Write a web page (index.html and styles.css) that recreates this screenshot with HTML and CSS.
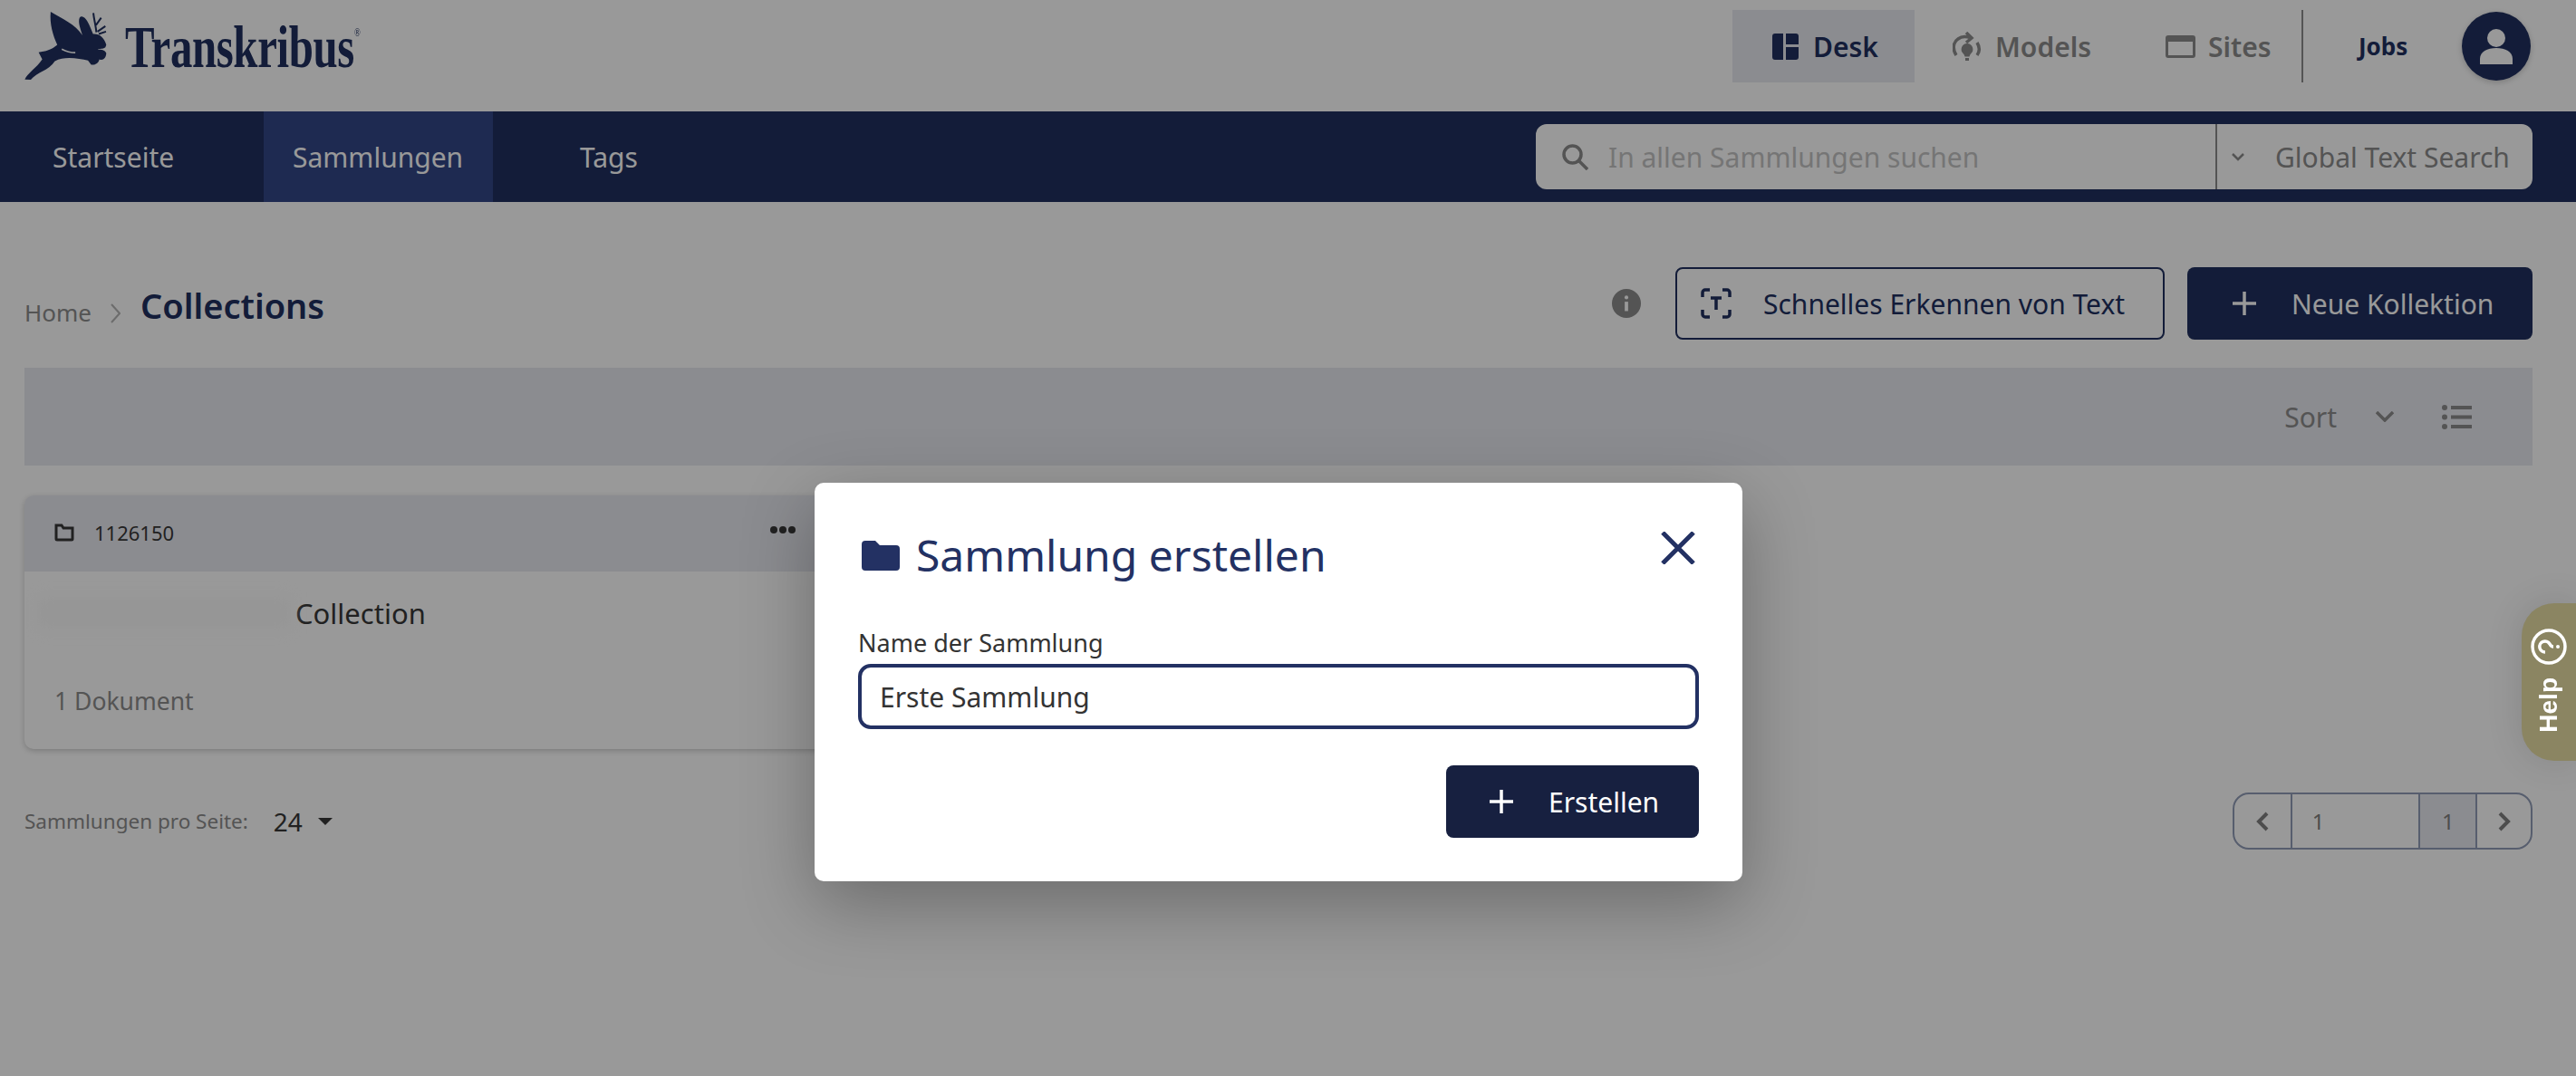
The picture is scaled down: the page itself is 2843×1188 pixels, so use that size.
FILE: index.html
```html
<!DOCTYPE html>
<html lang="de">
<head>
<meta charset="utf-8">
<title>Transkribus</title>
<link rel="stylesheet" href="styles.css">
</head>
<body>
<header class="topbar">
  <a class="logo">
    <svg class="logo-mark" viewBox="82 40 272 226" aria-hidden="true">
      <path class="fill-logo" d="M168 40C205 62 250 82 274 118C268 100 258 75 264 60C272 50 283 60 290 72C298 86 304 102 309 114C330 112 346 126 353 150L350 158C340 166 332 160 324 166C336 164 350 168 353 178C352 194 342 204 330 198C328 210 316 218 303 216L292 202C262 196 216 186 182 204C162 236 122 240 102 266L82 265C90 245 122 226 140 198L128 175C150 172 172 166 190 150C176 120 164 80 168 40Z"/>
      <path class="logo-gap" d="M205 164C220 172 235 176 250 176"/>
      <path class="logo-antler" d="M320 108C318 85 312 65 310 44M319 84L336 60M324 106L350 88M328 114L352 106"/>
    </svg>
    <span class="logo-word">Transkribus<sup class="logo-reg">®</sup></span>
  </a>
  <nav class="appnav">
    <a class="appnav-item is-active">
      <svg class="ico-desk" viewBox="0 0 29 29"><path class="fill-navy-d" d="M3 0h9v29H3a3 3 0 0 1-3-3V3a3 3 0 0 1 3-3zM15 0h11a3 3 0 0 1 3 3v9H15zM15 15h14v11a3 3 0 0 1-3 3H15z"/></svg>
      <span>Desk</span>
    </a>
    <a class="appnav-item models">
      <svg class="ico-models" viewBox="0 0 32 33"><path class="stroke-grey" d="M4 26C0 20 0 12 6 8C10 5 15 5 20 7M15 1l6 6-6 5M27 12c3 5 3 10 0 14"/><path class="fill-grey" d="M16 13a6.500 6.500 0 0 1 4 11.500c-1 1-1 2-1.500 3h-5c-.5-1-.5-2-1.500-3A6.500 6.500 0 0 1 16 13zM14 29h4v3h-4z"/></svg>
      <span>Models</span>
    </a>
    <a class="appnav-item sites">
      <svg class="ico-sites" viewBox="0 0 33 25"><path class="fill-grey" d="M3 0h27a3 3 0 0 1 3 3v19a3 3 0 0 1-3 3H3a3 3 0 0 1-3-3V3a3 3 0 0 1 3-3zm0 7v15h27V7z"/></svg>
      <span>Sites</span>
    </a>
    <span class="appnav-sep"></span>
    <a class="jobs">Jobs</a>
    <span class="avatar">
      <svg class="ico-user" viewBox="0 0 36 40"><circle class="fill-white" cx="18" cy="11" r="10"/><path class="fill-white" d="M0 40v-6c0-8 8-12 18-12s18 4 18 12v6z"/></svg>
    </span>
  </nav>
</header>

<div class="mainnav">
  <nav class="tabs">
    <a class="tab tab-home">Startseite</a>
    <a class="tab tab-coll is-active">Sammlungen</a>
    <a class="tab tab-tags">Tags</a>
  </nav>
  <div class="search">
    <div class="search-left">
      <svg class="ico-search" viewBox="0 0 29 29"><circle class="stroke-search" cx="11.500" cy="11.500" r="9.500"/><path class="stroke-search" d="M18.500 18.500L28 28"/></svg>
      <input class="search-input" placeholder="In allen Sammlungen suchen">
    </div>
    <div class="search-right">
      <svg class="ico-chev-s" viewBox="0 0 14 9"><path class="stroke-grey-thin" d="M1 1l6 6 6-6"/></svg>
      <span>Global Text Search</span>
    </div>
  </div>
</div>

<main class="content">
  <div class="pagehead">
    <div class="crumbs">
      <a class="crumb">Home</a>
      <svg class="ico-crumb" viewBox="0 0 11 22"><path class="stroke-crumb" d="M1 1l9 10-9 10"/></svg>
      <h1 class="crumb-current">Collections</h1>
    </div>
    <div class="actions">
      <span class="info"><svg class="ico-info" viewBox="0 0 34 34"><circle class="fill-grey" cx="17" cy="17" r="17"/><circle class="fill-infodot" cx="17" cy="10" r="2.200"/><path class="fill-infodot" d="M15 15h4v11h-4z"/></svg></span>
      <button class="btn btn-outline">
        <svg class="ico-ocr" viewBox="0 0 34 34"><path class="stroke-navy" d="M10 2H5a3 3 0 0 0-3 3v5M24 2h5a3 3 0 0 1 3 3v5M10 32H5a3 3 0 0 1-3-3v-5M24 32h5a3 3 0 0 0 3-3v-5M11 11h12M17 11v13"/></svg>
        <span>Schnelles Erkennen von Text</span>
      </button>
      <button class="btn btn-solid btn-new">
        <svg class="ico-plus" viewBox="0 0 26 26"><path class="stroke-light" d="M13 0v26M0 13h26"/></svg>
        <span>Neue Kollektion</span>
      </button>
    </div>
  </div>

  <div class="toolbar">
    <span class="sort">Sort</span>
    <svg class="ico-chev" viewBox="0 0 20 12"><path class="stroke-grey" d="M1 1l9 9 9-9"/></svg>
    <svg class="ico-list" viewBox="0 0 33 27"><circle class="fill-grey" cx="3" cy="3" r="3"/><circle class="fill-grey" cx="3" cy="13.500" r="3"/><circle class="fill-grey" cx="3" cy="24" r="3"/><path class="fill-grey" d="M10 1h23v4H10zM10 11.500h23v4H10zM10 22h23v4H10z"/></svg>
  </div>

  <article class="card">
    <div class="card-head">
      <div class="card-id">
        <svg class="ico-folder-o" viewBox="0 0 22 20"><path class="stroke-dark" d="M2 17V2h6l2 3h10v12a1 1 0 0 1-1 1H3a1 1 0 0 1-1-1z"/></svg>
        <span>1126150</span>
      </div>
      <svg class="ico-dots" viewBox="0 0 28 10"><circle class="fill-dark" cx="4" cy="5" r="4"/><circle class="fill-dark" cx="14" cy="5" r="4"/><circle class="fill-dark" cx="24" cy="5" r="4"/></svg>
    </div>
    <div class="card-title"><span class="redacted"></span><span>Collection</span></div>
    <div class="card-count">1 Dokument</div>
  </article>

  <div class="footerbar">
    <div class="perpage">
      <span class="perpage-label">Sammlungen pro Seite:</span>
      <span class="perpage-value">24</span>
      <span class="perpage-caret"></span>
    </div>
    <div class="pager">
      <span class="pager-btn"><svg class="ico-pg" viewBox="0 0 14 22"><path class="stroke-pg" d="M12 2l-9 9 9 9"/></svg></span>
      <span class="pager-input">1</span>
      <span class="pager-total">1</span>
      <span class="pager-btn last"><svg class="ico-pg" viewBox="0 0 14 22"><path class="stroke-pg" d="M2 2l9 9-9 9"/></svg></span>
    </div>
  </div>
</main>

<div class="backdrop"></div>

<aside class="help">
  <svg class="ico-help" viewBox="0 0 40 40"><circle class="stroke-white" cx="20" cy="20" r="18"/><path class="stroke-white-q" d="M14 16a6 6 0 1 1 9 5c-2 1-3 2-3 4"/><circle class="fill-white" cx="20" cy="30" r="2"/></svg>
  <span class="help-text">Help</span>
</aside>

<section class="modal" role="dialog">
  <div class="modal-head">
    <svg class="ico-folder" viewBox="0 0 42 33"><path class="fill-primary" d="M4 0h11l5 5h18a4 4 0 0 1 4 4v20a4 4 0 0 1-4 4H4a4 4 0 0 1-4-4V4a4 4 0 0 1 4-4z"/></svg>
    <h2 class="modal-title">Sammlung erstellen</h2>
    <svg class="ico-close" viewBox="0 0 38 36"><path class="stroke-close" d="M2 1l34 34M36 1L2 35"/></svg>
  </div>
  <label class="field-label" for="name">Name der Sammlung</label>
  <input class="field-input" id="name" value="Erste Sammlung">
  <div class="modal-foot">
    <button class="btn btn-solid btn-create">
      <svg class="ico-plus" viewBox="0 0 26 26"><path class="stroke-white-plus" d="M13 0v26M0 13h26"/></svg>
      <span>Erstellen</span>
    </button>
  </div>
</section>
</body>
</html>
```
FILE: styles.css
```css
* { box-sizing: border-box; }
html, body { margin: 0; padding: 0; }
body {
  width: 2843px;
  height: 1188px;
  overflow: hidden;
  position: relative;
  background: #fff;
  color: #383838;
  font-family: "Noto Sans", "Liberation Sans", sans-serif;
  font-size: 30px;
}
h1, h2 { margin: 0; font-weight: 400; }
svg { display: block; flex: none; }
button, input { font: inherit; }

/* svg paints */
.fill-logo { fill: #20305f; }
.logo-gap { fill: none; stroke: #fff; stroke-width: 5; }
.logo-antler { fill: none; stroke: #20305f; stroke-width: 6; }
.fill-navy-d { fill: #20305f; }
.fill-grey { fill: #8c8c8c; }
.fill-white { fill: #fff; }
.fill-dark { fill: #383838; }
.fill-infodot { fill: #fff; }
.fill-primary { fill: #233163; }
.stroke-grey { fill: none; stroke: #8c8c8c; stroke-width: 3.500; }
.stroke-grey-thin { fill: none; stroke: #8c8c8c; stroke-width: 2.500; }
.stroke-search { fill: none; stroke: #8c8c8c; stroke-width: 3.500; }
.stroke-crumb { fill: none; stroke: #b4b4b4; stroke-width: 2; }
.stroke-navy { fill: none; stroke: #20305f; stroke-width: 3.500; }
.stroke-light { fill: none; stroke: #fff; stroke-width: 3.500; }
.stroke-dark { fill: none; stroke: #383838; stroke-width: 3; }
.stroke-pg { fill: none; stroke: #808080; stroke-width: 4; }
.stroke-white { fill: none; stroke: #fff; stroke-width: 3.500; }
.stroke-white-q { fill: none; stroke: #fff; stroke-width: 3.500; }
.stroke-white-plus { fill: none; stroke: #fff; stroke-width: 3.500; }
.stroke-close { fill: none; stroke: #233163; stroke-width: 5; }

/* top bar */
.topbar {
  height: 123px;
  display: flex;
  justify-content: space-between;
  align-items: flex-start;
  padding: 11px 50px 0 27px;
}
.logo { display: flex; align-items: flex-start; gap: 20px; padding-top: 2px; }
.logo-mark { width: 91px; height: 75px; }
.logo-word {
  margin-top: 1px;
  font-family: "Liberation Serif", serif;
  font-weight: 700;
  font-size: 66px;
  line-height: 76px;
  letter-spacing: -.5px;
  color: #20305f;
  transform: scaleX(.74);
  transform-origin: left center;
}
.logo-reg { font-size: 12px; font-weight: 400; vertical-align: 34px; line-height: 0; letter-spacing: 0; }
.appnav { display: flex; align-items: flex-start; }
.appnav-item {
  height: 80px;
  display: flex;
  align-items: center;
  font-weight: 600;
  color: #8c8c8c;
}
.appnav-item.is-active {
  width: 201px;
  gap: 16px;
  padding-left: 44px;
  background: #e8e9f0;
  color: #20305f;
}
.models { width: 200px; margin-left: 42px; gap: 15px; }
.sites { width: 150px; margin-left: 35px; gap: 14px; }
.ico-desk { width: 29px; height: 29px; }
.ico-models { width: 32px; height: 33px; }
.ico-sites { width: 33px; height: 25px; }
.appnav-sep { width: 2px; height: 80px; background: #8c8c8c; }
.jobs {
  width: 114px;
  height: 80px;
  margin-left: 61px;
  display: flex;
  align-items: center;
  font-size: 26px;
  font-weight: 700;
  color: #20305f;
}
.avatar {
  width: 76px;
  height: 76px;
  margin-top: 2px;
  border-radius: 50%;
  background: #20305f;
  display: flex;
  align-items: center;
  justify-content: center;
  box-shadow: 0 2px 6px rgba(0, 0, 0, .2);
}
.ico-user { width: 36px; height: 40px; }

/* main nav */
.mainnav {
  height: 100px;
  background: #20305f;
  display: flex;
  justify-content: space-between;
  align-items: center;
  padding-right: 48px;
}
.tabs { display: flex; height: 100%; }
.tab {
  display: flex;
  align-items: center;
  height: 100%;
  color: #fff;
}
.tab-home { width: 291px; padding-left: 58px; }
.tab-coll { width: 253px; padding-left: 32px; background: #324788; }
.tab-tags { padding-left: 96px; }
.search {
  width: 1100px;
  height: 72px;
  display: flex;
  background: #fff;
  border-radius: 12px;
}
.search-left { width: 750px; display: flex; align-items: center; padding-left: 29px; gap: 22px; }
.ico-search { width: 29px; height: 29px; }
.search-input { flex: 1; min-width: 0; border: 0; outline: 0; padding: 0; background: none; color: #333; }
.search-input::placeholder { color: #c4c4c4; opacity: 1; }
.search-right {
  flex: 1;
  display: flex;
  align-items: center;
  gap: 34px;
  padding-left: 16px;
  border-left: 2px solid #8c8c8c;
  color: #8c8c8c;
}
.ico-chev-s { width: 14px; height: 9px; }

/* content */
.content { padding: 0 48px 0 27px; }
.pagehead {
  height: 183px;
  display: flex;
  justify-content: space-between;
  align-items: flex-start;
  padding-top: 72px;
}
.crumbs { display: flex; align-items: flex-end; height: 80px; padding-bottom: 10px; }
.crumb { font-size: 26px; line-height: 40px; color: #8c8c8c; }
.ico-crumb { width: 11px; height: 22px; margin: 0 22px 8px 21px; }
.crumb-current { font-size: 38px; line-height: 56px; font-weight: 600; color: #20305f; }
.actions { display: flex; align-items: center; height: 80px; }
.info { margin-right: 38px; }
.ico-info { width: 32px; height: 34px; }
.btn {
  height: 80px;
  display: flex;
  align-items: center;
  border-radius: 8px;
  padding: 0;
  border: 0;
}
.btn-outline {
  width: 540px;
  gap: 35px;
  padding-left: 26px;
  background: none;
  border: 2px solid #20305f;
  color: #20305f;
}
.ico-ocr { width: 34px; height: 34px; }
.btn-solid { background: #20305f; color: #fff; gap: 39px; }
.btn-new { width: 381px; margin-left: 25px; padding-left: 50px; }
.ico-plus { width: 26px; height: 26px; }

.toolbar {
  height: 108px;
  background: #e8e9f0;
  display: flex;
  justify-content: flex-end;
  align-items: center;
  padding-right: 67px;
  color: #8c8c8c;
}
.sort { font-size: 30px; }
.ico-chev { width: 20px; height: 12px; margin: 0 53px 0 43px; }
.ico-list { width: 33px; height: 27px; }

.card {
  width: 890px;
  height: 280px;
  margin-top: 33px;
  background: #fff;
  border-radius: 10px;
  box-shadow: 0 2px 6px rgba(0, 0, 0, .2);
  overflow: hidden;
}
.card-head {
  height: 84px;
  background: #e8e9f0;
  display: flex;
  justify-content: space-between;
  align-items: flex-start;
  padding: 25px 39px 0 33px;
}
.card-id { display: flex; align-items: center; gap: 22px; font-size: 22px; line-height: 32px; }
.ico-folder-o { width: 22px; height: 20px; }
.ico-dots { width: 28px; height: 10px; margin-top: 8px; }
.card-title {
  height: 68px;
  margin-top: 12px;
  display: flex;
  align-items: center;
  padding-left: 14px;
  font-size: 31px;
}
.redacted {
  width: 280px;
  height: 36px;
  margin-right: 5px;
  background: #fafafa;
  filter: blur(8px);
}
.card-count { margin-top: 43px; padding-left: 33px; font-size: 26.500px; line-height: 40px; color: #8c8c8c; }

.footerbar {
  display: flex;
  justify-content: space-between;
  align-items: center;
  height: 63px;
  margin-top: 48px;
}
.perpage { display: flex; align-items: center; }
.perpage-label { font-size: 22.500px; color: #8c8c8c; }
.perpage-value { font-size: 28px; margin-left: 28px; }
.perpage-caret {
  width: 0;
  height: 0;
  margin-left: 17px;
  border: 8px solid transparent;
  border-bottom: 0;
  border-top-color: #383838;
}
.pager {
  width: 331px;
  height: 63px;
  display: flex;
  border: 2px solid #929db8;
  border-radius: 18px;
  font-size: 24px;
  color: #808080;
  overflow: hidden;
}
.pager-btn { width: 62px; display: flex; align-items: center; justify-content: center; }
.pager-btn.last { width: 61px; border-left: 2px solid #929db8; }
.ico-pg { width: 14px; height: 22px; }
.pager-input { width: 142px; display: flex; align-items: center; padding-left: 22px; border-left: 2px solid #929db8; }
.pager-total { width: 63px; display: flex; align-items: center; justify-content: center; background: #e8e9f0; border-left: 2px solid #929db8; }

/* overlay layer */
.backdrop { position: absolute; inset: 0; background: rgba(0, 0, 0, .4); }
.help {
  position: absolute;
  right: 0;
  top: 666px;
  width: 60px;
  height: 174px;
  background: #8b8562;
  border-radius: 36px 0 0 36px;
  box-shadow: 0 0 40px rgba(0, 0, 0, .12);
  display: flex;
  flex-direction: column;
  align-items: center;
  padding: 28px 0 0 0;
  color: #fff;
}
.ico-help { width: 40px; height: 40px; transform: rotate(-90deg); }
.help-text {
  margin-top: 14px;
  writing-mode: vertical-rl;
  transform: rotate(180deg);
  font-family: "Liberation Sans", sans-serif;
  font-size: 28px;
  font-weight: 700;
  line-height: 40px;
}
.modal {
  position: absolute;
  left: 899px;
  top: 533px;
  width: 1024px;
  height: 440px;
  background: #fff;
  border-radius: 10px;
  padding: 47px 48px 0;
  box-shadow: 0 24px 80px rgba(0, 0, 0, .3);
}
.modal-head { display: flex; align-items: flex-start; height: 110px; color: #233163; }
.ico-folder { width: 42px; height: 33px; margin: 17px 18px 0 4px; }
.modal-title { flex: 1; font-size: 48px; line-height: 66px; }
.ico-close { width: 38px; height: 36px; margin: 7px 4px 0 0; }
.field-label { display: block; font-size: 27px; line-height: 40px; color: #333; }
.field-input {
  display: block;
  width: 928px;
  height: 72px;
  margin-top: 3px;
  padding: 0 20px;
  border: 4px solid #233163;
  border-radius: 14px;
  outline: 0;
  color: #333;
  font-size: 30px;
}
.modal-foot { display: flex; justify-content: flex-end; margin-top: 40px; }
.btn-create { width: 279px; padding-left: 48px; background: #172040; gap: 39px; }
```
